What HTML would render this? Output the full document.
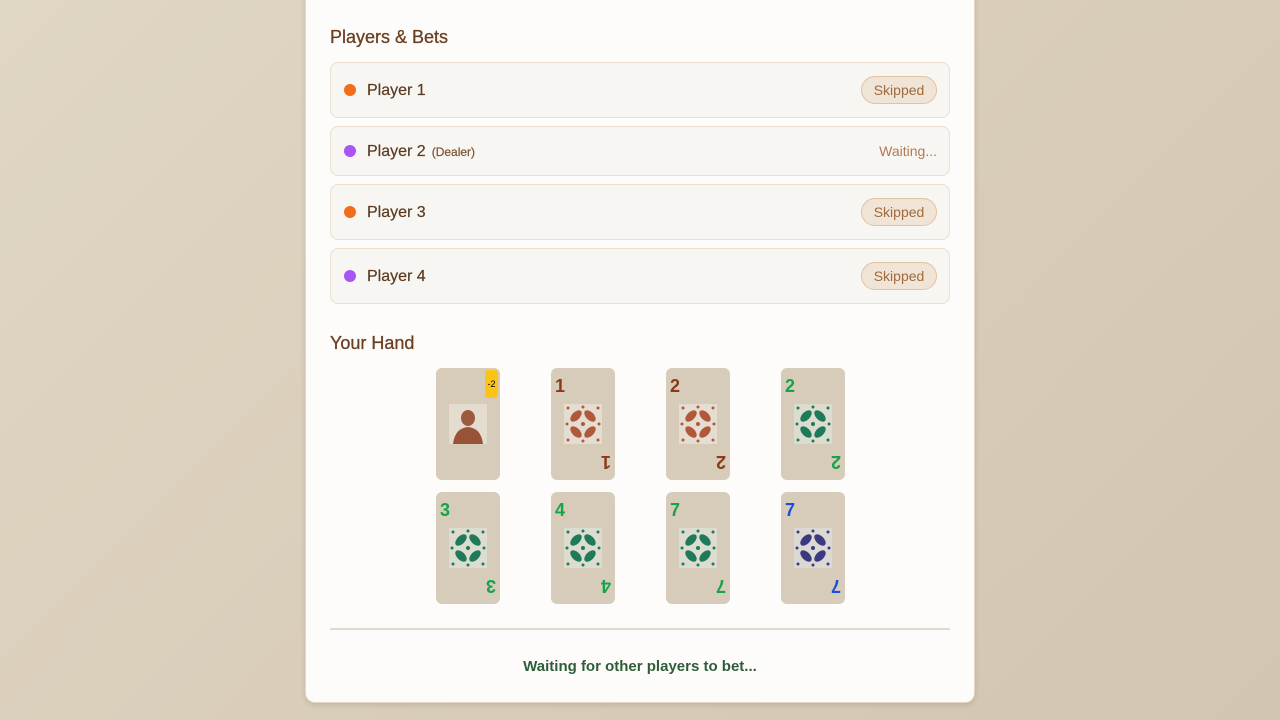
<!DOCTYPE html>
<html><head><meta charset="utf-8"><style>
body{margin:0;width:1280px;height:720px;overflow:hidden;background:linear-gradient(135deg,#e0d6c4,#d3c6b0);font-family:"Liberation Sans",sans-serif;position:relative}
.panel{position:absolute;left:305px;top:-20px;width:668px;height:721px;background:#fdfcfa;border:1px solid #e3d8c6;border-radius:10px;box-shadow:0 2px 6px rgba(0,0,0,.12)}
h2{position:absolute;left:330px;margin:0;font-size:18px;font-weight:normal;color:#6b3f22;-webkit-text-stroke:.3px #6b3f22}
.row{position:absolute;left:330px;width:618px;background:#f8f6f2;border:1px solid #ecdfcf;border-radius:8px}
.dot{position:absolute;left:13px;width:12px;height:12px;border-radius:50%}
.name{position:absolute;left:36px;font-size:16px;color:#5a3a22;-webkit-text-stroke:.2px #5a3a22}
.name small{font-size:12px;color:#8a5a36;margin-left:6px}
.pill{position:absolute;right:12px;top:13px;width:76px;height:28px;box-sizing:border-box;border:1px solid #dfc3a3;background:#f0e4d6;border-radius:14px;color:#a06a3e;font-size:14px;text-align:center;line-height:26px}
.card{position:absolute;width:64px;height:112px;background:#d6ccb9;border-radius:6px}
.card .n{position:absolute;left:4px;top:8px;font-weight:bold;font-size:18px}
.card .m{position:absolute;right:4px;bottom:8px;font-weight:bold;font-size:18px;transform:rotate(180deg)}
.card svg{position:absolute;left:13px;top:36px}
</style></head><body>
<div class="panel"></div>
<h2 style="top:27px">Players &amp; Bets</h2>
<div class="row" style="top:62px;height:54px"><div class="dot" style="top:21px;background:#f26d1b"></div><div class="name" style="top:19px">Player 1</div><div class="pill">Skipped</div></div>
<div class="row" style="top:126px;height:48px"><div class="dot" style="top:18px;background:#a855f7"></div><div class="name" style="top:16px">Player 2<small>(Dealer)</small></div><div style="position:absolute;right:12px;top:16px;color:#b07a52;font-size:14px">Waiting...</div></div>
<div class="row" style="top:184px;height:54px"><div class="dot" style="top:21px;background:#f26d1b"></div><div class="name" style="top:19px">Player 3</div><div class="pill">Skipped</div></div>
<div class="row" style="top:248px;height:54px"><div class="dot" style="top:21px;background:#a855f7"></div><div class="name" style="top:19px">Player 4</div><div class="pill">Skipped</div></div>
<h2 style="top:333px">Your Hand</h2>

<div class="card" style="left:436px;top:368px"><div style="position:absolute;right:2px;top:2px;width:13px;height:28px;background:#fcc419;border-radius:3px;font-size:9px;line-height:28px;text-align:center;color:#000">-2</div>
<svg width="38" height="40" viewBox="0 0 38 40"><rect width="38" height="40" fill="#e4dccf"/><ellipse cx="19" cy="14" rx="7" ry="8" fill="#8b3a1a" opacity=".8"/><path d="M4 40 Q6 24 19 23 Q32 24 34 40Z" fill="#8b3a1a" opacity=".85"/></svg></div>

<div class="card" style="left:551px;top:368px"><div class="n" style="color:#8b3a1a">1</div><div class="m" style="color:#8b3a1a">1</div><svg width="38" height="40"><use href="#p1"/></svg></div>
<div class="card" style="left:666px;top:368px"><div class="n" style="color:#8b3a1a">2</div><div class="m" style="color:#8b3a1a">2</div><svg width="38" height="40"><use href="#p1"/></svg></div>
<div class="card" style="left:781px;top:368px"><div class="n" style="color:#16a34a">2</div><div class="m" style="color:#16a34a">2</div><svg width="38" height="40"><use href="#p2"/></svg></div>
<div class="card" style="left:436px;top:492px"><div class="n" style="color:#16a34a">3</div><div class="m" style="color:#16a34a">3</div><svg width="38" height="40"><use href="#p2"/></svg></div>
<div class="card" style="left:551px;top:492px"><div class="n" style="color:#16a34a">4</div><div class="m" style="color:#16a34a">4</div><svg width="38" height="40"><use href="#p2"/></svg></div>
<div class="card" style="left:666px;top:492px"><div class="n" style="color:#16a34a">7</div><div class="m" style="color:#16a34a">7</div><svg width="38" height="40"><use href="#p2"/></svg></div>
<div class="card" style="left:781px;top:492px"><div class="n" style="color:#1d4ed8">7</div><div class="m" style="color:#1d4ed8">7</div><svg width="38" height="40"><use href="#p3"/></svg></div>

<svg width="0" height="0" style="position:absolute"><defs>
<g id="leaf"><ellipse cx="12" cy="12" rx="7" ry="4" transform="rotate(-45 12 12)"/><ellipse cx="26" cy="12" rx="7" ry="4" transform="rotate(45 26 12)"/><ellipse cx="12" cy="28" rx="7" ry="4" transform="rotate(45 12 28)"/><ellipse cx="26" cy="28" rx="7" ry="4" transform="rotate(-45 26 28)"/><circle cx="19" cy="20" r="2"/><circle cx="4" cy="4" r="1.5"/><circle cx="34" cy="4" r="1.5"/><circle cx="4" cy="36" r="1.5"/><circle cx="34" cy="36" r="1.5"/><circle cx="19" cy="3" r="1.5"/><circle cx="19" cy="37" r="1.5"/><circle cx="3" cy="20" r="1.5"/><circle cx="35" cy="20" r="1.5"/></g>
<g id="p1"><rect width="38" height="40" fill="#e6ddd2"/><g fill="#b0593a"><use href="#leaf"/></g></g>
<g id="p2"><rect width="38" height="40" fill="#dcdcd0"/><g fill="#1f7a5a"><use href="#leaf"/></g></g>
<g id="p3"><rect width="38" height="40" fill="#dcd8d4"/><g fill="#3b3a80"><use href="#leaf"/></g></g>
</defs></svg>

<div style="position:absolute;left:330px;top:628px;width:620px;height:2px;background:#e0d9cc"></div>
<div style="position:absolute;left:330px;width:620px;top:658px;text-align:center;color:#2f5d3a;font-size:15px;font-weight:bold">Waiting for other players to bet...</div>
</body></html>
